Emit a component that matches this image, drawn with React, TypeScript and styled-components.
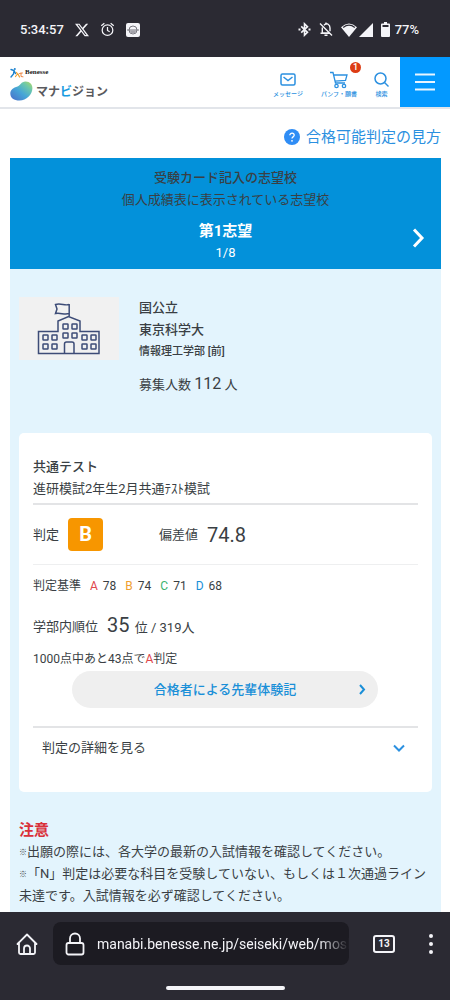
import React from "react";
import styled, { createGlobalStyle } from "styled-components";

const c = {
  chrome: "#2b2a33",
  urlField: "#1c1b22",
  chromeInk: "#f4f4f8",
  blue: "#0391da",
  menu: "#0399ff",
  link: "#2b90e0",
  pale: "#e3f4fd",
  ink: "#3a3f44",
  line: "#e3e4e6",
  red: "#d9303a",
};

const Global = createGlobalStyle`
  * { box-sizing: border-box; }
  body {
    margin: 0;
    background: #fff;
    color: ${c.ink};
    font: 13px/22px Roboto, "Noto Sans CJK JP", sans-serif;
  }
  h1, h2, h3, p, dl, dt, dd { margin: 0; font: inherit; }
  a { color: inherit; text-decoration: none; }
  button { font: inherit; color: inherit; border: 0; background: none; padding: 0; }
  svg { display: block; flex: none; }
`;

const Page = styled.div`
  display: flex;
  flex-direction: column;
  min-height: 100vh;
`;

const StatusBar = styled.div`
  display: flex;
  align-items: center;
  justify-content: space-between;
  height: 57px;
  padding: 2px 31px 0 20px;
  background: ${c.chrome};
  color: ${c.chromeInk};
  font-weight: 500;
`;

const StatusGroup = styled.div<{ $gap: number }>`
  display: flex;
  align-items: center;
  gap: ${(p) => p.$gap}px;
`;

const SiteHeader = styled.header`
  display: flex;
  justify-content: space-between;
  height: 52px;
  border-bottom: 2px solid #e2e5ea;
`;

const Brand = styled.a`
  display: flex;
  flex-direction: column;
  padding: 10px 0 0 10px;
`;

const BrandParent = styled.span`
  display: flex;
  align-items: center;
  gap: 1px;
  height: 11px;
  font: bold 7px/11px "Liberation Serif", serif;
  color: #222;
`;

const BrandName = styled.span`
  display: flex;
  align-items: center;
  gap: 3px;
  margin-top: 3px;
  font: 700 12px/20px "Noto Sans CJK JP", sans-serif;
  color: #5a5a5e;

  em {
    font-style: normal;
    color: #189be0;
  }
`;

const HeaderNav = styled.nav`
  display: flex;
`;

const NavLink = styled.a<{ $width: number }>`
  position: relative;
  display: flex;
  flex-direction: column;
  align-items: center;
  justify-content: flex-end;
  width: ${(p) => p.$width}px;
  padding-bottom: 8px;
  color: ${c.link};
  font-size: 6px;
  font-weight: 500;
  line-height: 10px;
  white-space: nowrap;
`;

const CartBadge = styled.span`
  position: absolute;
  top: 5px;
  right: 7px;
  width: 11px;
  height: 11px;
  border-radius: 50%;
  background: #dd3c14;
  color: #fff;
  font-size: 9px;
  font-weight: 500;
  line-height: 11px;
  text-align: center;
`;

const MenuButton = styled.button`
  display: flex;
  align-items: center;
  justify-content: center;
  width: 50px;
  margin-left: 5px;
  background: ${c.menu};
`;

const Main = styled.main`
  flex: 1;
  display: flex;
  flex-direction: column;
  padding: 17px 9px 0 10px;
`;

const HelpLink = styled.a`
  display: flex;
  align-items: center;
  align-self: flex-end;
  gap: 6px;
  margin-bottom: 10px;
  color: ${c.link};
  font-size: 15px;
`;

const ChoiceBar = styled.section`
  padding: 9px 0 5px;
  background: ${c.blue};
  text-align: center;
`;

const ChoiceHeading = styled.h2`
  font-weight: 500;
`;

const ChoicePager = styled.div`
  display: grid;
  grid-template-columns: 46px 1fr 46px;
  align-items: start;
  margin-top: 9px;
  color: #fff;
`;

const ChoiceName = styled.h3`
  font-size: 15px;
  font-weight: 700;
`;

const NextButton = styled.button`
  grid-column: 3;
  display: flex;
  justify-content: center;
  padding-top: 8px;
`;

const Panel = styled.div`
  flex: 1;
  padding: 28px 9px 5px;
  background: ${c.pale};
`;

const School = styled.section`
  display: flex;
  align-items: flex-start;
  gap: 20px;
  margin-bottom: 37px;
`;

const SchoolPicture = styled.div`
  display: flex;
  align-items: center;
  justify-content: center;
  width: 100px;
  height: 63px;
  background: #f1f1f1;
`;

const SchoolName = styled.h2`
  font-weight: 500;
`;

const Faculty = styled.p`
  margin-bottom: 10px;
  font-size: 11px;
  font-weight: 500;
`;

const Quota = styled.p`
  b {
    font-size: 16px;
    font-weight: 400;
  }
`;

const Card = styled.section`
  padding: 23px 14px 33px;
  border-radius: 5px;
  background: #fff;
`;

const CardTitle = styled.h3`
  font-weight: 500;
`;

const ScoreRow = styled.dl`
  display: flex;
  align-items: center;
  height: 62px;
  margin-top: 3px;
  border-top: 2px solid ${c.line};
  border-bottom: 1px solid #eeeff0;
`;

const Grade = styled.dd`
  width: 35px;
  margin: 0 56px 0 9px;
  border-radius: 4px;
  background: #f79600;
  color: #fff;
  font-size: 20px;
  font-weight: 700;
  line-height: 33px;
  text-align: center;
`;

const Deviation = styled.dd`
  margin-left: 9px;
  font-size: 20px;
`;

const Criteria = styled.dl`
  display: flex;
  gap: 9px;
  margin-top: 10px;
  font-size: 12px;
`;

const Criterion = styled.dd`
  display: flex;
  gap: 5px;
`;

const Letter = styled.span<{ $color: string }>`
  color: ${(p) => p.$color};
`;

const Rank = styled.dl`
  display: flex;
  align-items: center;
  gap: 9px;
  height: 22px;
  margin-top: 19px;

  b {
    margin-right: 2px;
    font-size: 20px;
    font-weight: 400;
    line-height: 20px;
  }
`;

const Shortfall = styled.p`
  margin-top: 10px;
  font-size: 12px;
`;

const StoriesLink = styled.a`
  display: grid;
  grid-template-columns: 32px 1fr 32px;
  align-items: center;
  height: 37px;
  margin: 1px 40px 18px 39px;
  border-radius: 19px;
  background: #efefef;
  color: #1a8fd8;
  font-weight: 500;
  text-align: center;

  svg {
    grid-column: 3;
    justify-self: center;
  }

  span {
    grid-column: 2;
    grid-row: 1;
  }
`;

const DetailsButton = styled.button`
  display: flex;
  align-items: center;
  justify-content: space-between;
  width: 100%;
  padding: 9px 13px 0 9px;
  border-top: 2px solid ${c.line};
`;

const Notice = styled.section`
  margin-top: 27px;
`;

const NoticeTitle = styled.h2`
  color: ${c.red};
  font-size: 15px;
  font-weight: 700;
`;

const Mark = styled.span`
  display: inline-block;
  width: 8px;
  font-size: 8px;
  font-weight: 900;
  line-height: 8px;
  vertical-align: 1px;
`;

const BrowserBar = styled.footer`
  position: sticky;
  bottom: 0;
  height: 88px;
  padding-top: 10px;
  background: ${c.chrome};
  color: ${c.chromeInk};
`;

const BrowserRow = styled.div`
  display: flex;
  align-items: center;
  padding: 0 9px 0 16px;
`;

const BarButton = styled.button`
  display: flex;
  align-items: center;
  justify-content: center;
`;

const AddressField = styled.label`
  flex: 1;
  display: flex;
  align-items: center;
  gap: 12px;
  height: 43px;
  min-width: 0;
  margin: 0 24px 0 15px;
  padding-left: 12px;
  border-radius: 8px;
  background: ${c.urlField};
`;

const AddressInput = styled.input`
  flex: 1;
  min-width: 0;
  height: 30px;
  padding: 0;
  border: 0;
  background: none;
  color: ${c.chromeInk};
  font: 14px/30px Roboto, sans-serif;
  outline: none;
  mask-image: linear-gradient(to right, #000 88%, transparent);
`;

const TabsButton = styled.button`
  width: 22px;
  height: 18px;
  margin-right: 26px;
  border: 2px solid ${c.chromeInk};
  border-radius: 3px;
  font-size: 10px;
  font-weight: 700;
  line-height: 14px;
`;

const GestureHandle = styled.div`
  width: 119px;
  height: 4px;
  margin: 21px auto 0;
  border-radius: 2px;
  background: ${c.chromeInk};
`;

const Chevron = ({ w, h, stroke = 2, color }: { w: number; h: number; stroke?: number; color: string }) => (
  <svg width={w} height={h} viewBox={`0 0 ${w} ${h}`} fill="none" stroke={color} strokeWidth={stroke}>
    <path d={`M${stroke} ${stroke / 2}L${w - stroke} ${h / 2}L${stroke} ${h - stroke / 2}`} />
  </svg>
);

const XIcon = () => (
  <svg width="14" height="14" viewBox="0 0 24 24" fill="currentColor">
    <path d="M18.9 1.2h3.7l-8 9.2L24 22.8h-7.4l-5.8-7.6-6.6 7.6H.5l8.6-9.8L0 1.2h7.6l5.2 6.9zM17.6 20.6h2L6.5 3.2H4.3z" />
  </svg>
);

const AlarmIcon = () => (
  <svg width="15" height="15" viewBox="0 0 24 24" fill="none" stroke="currentColor" strokeWidth="2">
    <circle cx="12" cy="13" r="8.5" />
    <path d="M12 8v5.5l3.5 2M2 6l5-4M22 6l-5-4" />
  </svg>
);

const AppIcon = () => (
  <svg width="14" height="14" viewBox="0 0 14 14">
    <rect width="14" height="14" rx="2" fill="#f4f4f8" />
    <circle cx="7" cy="7" r="4" fill="none" stroke="#77767e" />
    <path d="M1 7h12" stroke="#77767e" />
    <path d="M4 7.5h6a3 3 0 0 1-6 0z" fill="#a3a2aa" />
  </svg>
);

const BluetoothIcon = () => (
  <svg width="13" height="15" viewBox="0 0 13 15" fill="none" stroke="currentColor" strokeWidth="1.6">
    <path d="M3.2 4.3l6.3 6-3 2.900V1.8l3 2.900-6.3 6" />
    <path d="M0.5 7.5h2M10.5 7.5h2" strokeWidth="2" />
  </svg>
);

const BellOffIcon = () => (
  <svg width="14" height="15" viewBox="0 0 14 15" fill="none" stroke="currentColor" strokeWidth="1.4">
    <path d="M5 3.2C8-0 11 3 11 6v3.2M3.3 5.5V11H10M1.5 11.3h9M1 1.5l12 12" />
    <path d="M5.5 13.3h3M7 .5v2" />
  </svg>
);

const WifiIcon = () => (
  <svg width="16" height="14" viewBox="0 0 16 14">
    <path d="M0 4.2Q8-3 16 4.2L8 14z" fill="currentColor" />
    <path d="M2.2 4.4Q8 0 13.8 4.4" fill="none" stroke="#2b2a33" strokeWidth="1.2" />
  </svg>
);

const SignalIcon = () => (
  <svg width="14" height="14" viewBox="0 0 14 14" fill="currentColor">
    <path d="M14 0v14H0z" />
  </svg>
);

const BatteryIcon = () => (
  <svg width="9" height="15" viewBox="0 0 9 15">
    <path d="M3 0h3v1.5h2a1 1 0 0 1 1 1V14a1 1 0 0 1-1 1H1a1 1 0 0 1-1-1V2.5a1 1 0 0 1 1-1h2z" fill="currentColor" />
    <path d="M1.5 3h6v2h-6z" fill="#2b2a33" />
  </svg>
);

const BenesseMark = () => (
  <svg width="14" height="10" viewBox="0 0 14 10" fill="none" strokeLinecap="round">
    <path d="M1 1.5l3 1L3.5 6 1 9M4 2.5l1.5 3" stroke="#1d83cf" strokeWidth="1.4" />
    <circle cx="4.8" cy="1" r="1" fill="#1d83cf" />
    <path d="M5.5 8.5l2-2.5-1-1.5M8 6l1.5 3" stroke="#f0a030" strokeWidth="1.2" />
    <path d="M9.5 5.5l3-.5M11 5v3.5l2 .3" stroke="#ee8a4a" />
  </svg>
);

const BeanLogo = () => (
  <svg width="23" height="20" viewBox="0 0 23 20">
    <defs>
      <linearGradient id="bean" x1="0" y1="1" x2="1" y2="0">
        <stop offset="0" stopColor="#4a6cc8" />
        <stop offset=".45" stopColor="#45a5d8" />
        <stop offset=".75" stopColor="#6cc8ac" />
        <stop offset="1" stopColor="#b5d860" />
      </linearGradient>
    </defs>
    <path
      d="M7.5 5.5C10.5 4.5 11 .8 15.5.6c4.3-.1 7 2.9 6.9 7C22.2 14 16.5 19.5 9.5 19.5 4 19.5.3 17 .3 12.5.3 8.8 3.5 6.5 7.5 5.5z"
      fill="url(#bean)"
    />
  </svg>
);

const MailIcon = () => (
  <svg width="16" height="18" viewBox="0 0 16 18" fill="none" stroke="currentColor" strokeWidth="1.5">
    <rect x="1" y="3" width="14" height="11" rx="1.5" />
    <path d="M3.5 6L8 9.5 12.5 6" />
  </svg>
);

const CartIcon = () => (
  <svg width="18" height="18" viewBox="0 0 18 18" fill="none" stroke="currentColor" strokeWidth="1.3">
    <path d="M0 1.5h3L5.5 12H15M3.6 4H17l-1.5 5.5-10.5.7" />
    <circle cx="6.5" cy="15" r="1.7" />
    <circle cx="14" cy="15" r="1.7" />
  </svg>
);

const SearchIcon = () => (
  <svg width="15" height="18" viewBox="0 0 15 18" fill="none" stroke="currentColor" strokeWidth="1.5">
    <circle cx="6.5" cy="7.5" r="5.5" />
    <path d="M10.5 11.5l4 4" />
  </svg>
);

const MenuIcon = () => (
  <svg width="20" height="18" viewBox="0 0 20 18" stroke="#e8f5ff" strokeWidth="2">
    <path d="M0 1.5h20M0 9h20M0 16.5h20" />
  </svg>
);

const HelpIcon = () => (
  <svg width="16" height="16" viewBox="0 0 16 16">
    <circle cx="8" cy="8" r="8" fill="#2f8df5" />
    <path d="M5.8 6.3c.1-3 4.6-2.7 4.4 0C10.1 8 8 7.8 8 9.6" fill="none" stroke="#fff" strokeWidth="1.3" />
    <circle cx="8" cy="11.8" r=".9" fill="#fff" />
  </svg>
);

const windowSpots = [
  [25, 23], [34, 23], [25, 32], [34, 32],
  [5, 34], [14, 34], [5, 43], [14, 43],
  [44, 34], [53, 34], [44, 43], [53, 43],
];

const SchoolIcon = () => (
  <svg width="64" height="54" viewBox="0 0 64 54" fill="none" stroke="#3d4c77" strokeWidth="1.5">
    <path d="M1.5 51.5v-22h19.5V19L31.5 14.5 43 19v10.5h19v22z" />
    <path d="M32.2 14.5V2M32 2.5c-4 1.5-8-1.5-13.5 0l1.5 4.5-1.5 4.5c5-1 9 1.5 13.5 0" />
    <path d="M27.5 51.5V42q0-2 2-2H35q2 0 2 2v9.5" />
    {windowSpots.map(([x, y]) => (
      <rect key={`${x}-${y}`} x={x + 1} y={y - 1} width="5" height="5" rx=".5" />
    ))}
  </svg>
);

const HomeIcon = () => (
  <svg width="22" height="24" viewBox="0 0 22 24" fill="none" stroke="currentColor" strokeWidth="1.8" strokeLinejoin="round" strokeLinecap="round">
    <path d="M1.5 12L11 2.5l9.5 9.5M3 11v9.5q0 1.5 1.5 1.5h13q1.5 0 1.5-1.5V11" />
    <path d="M8 22v-5.5a3 3 0 0 1 6 0V22" />
  </svg>
);

const LockIcon = () => (
  <svg width="20" height="24" viewBox="0 0 20 24" fill="none" stroke="currentColor" strokeWidth="1.8">
    <rect x="1.5" y="11" width="17" height="11.5" rx="2" />
    <path d="M5 11V6.5a5 5 0 0 1 10 0V11" />
  </svg>
);

const MoreIcon = () => (
  <svg width="20" height="22" viewBox="0 0 20 22" fill="currentColor">
    <circle cx="10" cy="3" r="2" />
    <circle cx="10" cy="11" r="2" />
    <circle cx="10" cy="19" r="2" />
  </svg>
);

const criteria = [
  { letter: "A", color: "#e0474c", score: 78 },
  { letter: "B", color: "#f0a030", score: 74 },
  { letter: "C", color: "#3cb371", score: 71 },
  { letter: "D", color: "#1a8fd8", score: 68 },
];

export default function App() {
  return (
    <Page>
      <Global />
      <StatusBar>
        <StatusGroup $gap={11}>
          <span>5:34:57</span>
          <XIcon />
          <AlarmIcon />
          <AppIcon />
        </StatusGroup>
        <StatusGroup $gap={8}>
          <BluetoothIcon />
          <BellOffIcon />
          <StatusGroup $gap={2}>
            <WifiIcon />
            <SignalIcon />
          </StatusGroup>
          <StatusGroup $gap={5}>
            <BatteryIcon />
            <span>77%</span>
          </StatusGroup>
        </StatusGroup>
      </StatusBar>

      <SiteHeader>
        <Brand href="#">
          <BrandParent>
            <BenesseMark />
            Benesse
          </BrandParent>
          <BrandName>
            <BeanLogo />
            <span>
              マナ<em>ビ</em>ジョン
            </span>
          </BrandName>
        </Brand>
        <HeaderNav>
          <NavLink href="#" $width={44}>
            <MailIcon />
            メッセージ
          </NavLink>
          <NavLink href="#" $width={58}>
            <CartIcon />
            パンフ・願書
            <CartBadge>1</CartBadge>
          </NavLink>
          <NavLink href="#" $width={27}>
            <SearchIcon />
            検索
          </NavLink>
          <MenuButton aria-label="メニュー">
            <MenuIcon />
          </MenuButton>
        </HeaderNav>
      </SiteHeader>

      <Main>
        <HelpLink href="#">
          <HelpIcon />
          合格可能判定の見方
        </HelpLink>

        <ChoiceBar>
          <ChoiceHeading>受験カード記入の志望校</ChoiceHeading>
          <p>個人成績表に表示されている志望校</p>
          <ChoicePager>
            <span />
            <div>
              <ChoiceName>第1志望</ChoiceName>
              <p>1/8</p>
            </div>
            <NextButton aria-label="次の志望校">
              <Chevron w={14} h={20} stroke={3} color="#fff" />
            </NextButton>
          </ChoicePager>
        </ChoiceBar>

        <Panel>
          <School>
            <SchoolPicture>
              <SchoolIcon />
            </SchoolPicture>
            <div>
              <SchoolName>
                国公立
                <br />
                東京科学大
              </SchoolName>
              <Faculty>情報理工学部 [前]</Faculty>
              <Quota>
                募集人数 <b>112</b> 人
              </Quota>
            </div>
          </School>

          <Card>
            <CardTitle>共通テスト</CardTitle>
            <p>進研模試2年生2月共通ﾃｽﾄ模試</p>
            <ScoreRow>
              <dt>判定</dt>
              <Grade>B</Grade>
              <dt>偏差値</dt>
              <Deviation>74.8</Deviation>
            </ScoreRow>
            <Criteria>
              <dt>判定基準</dt>
              {criteria.map((k) => (
                <Criterion key={k.letter}>
                  <Letter $color={k.color}>{k.letter}</Letter>
                  {k.score}
                </Criterion>
              ))}
            </Criteria>
            <Rank>
              <dt>学部内順位</dt>
              <dd>
                <b>35</b> 位 / 319人
              </dd>
            </Rank>
            <Shortfall>
              1000点中あと43点で<Letter $color="#e0474c">A</Letter>判定
            </Shortfall>
            <StoriesLink href="#">
              <span>合格者による先輩体験記</span>
              <Chevron w={8} h={11} color="#1a8fd8" />
            </StoriesLink>
            <DetailsButton aria-expanded={false}>
              判定の詳細を見る
              <svg width="12" height="8" viewBox="0 0 12 8" fill="none" stroke={c.link} strokeWidth="2">
                <path d="M1 1.5L6 6.5 11 1.5" />
              </svg>
            </DetailsButton>
          </Card>

          <Notice>
            <NoticeTitle>注意</NoticeTitle>
            <p>
              <Mark>※</Mark>出願の際には、各大学の最新の入試情報を確認してください。
            </p>
            <p>
              <Mark>※</Mark>「N」判定は必要な科目を受験していない、もしくは１次通過ライン未達です。入試情報を必ず確認してください。
            </p>
          </Notice>
        </Panel>
      </Main>

      <BrowserBar>
        <BrowserRow>
          <BarButton aria-label="ホーム">
            <HomeIcon />
          </BarButton>
          <AddressField>
            <LockIcon />
            <AddressInput aria-label="アドレス" readOnly value="manabi.benesse.ne.jp/seiseki/web/moshi/" />
          </AddressField>
          <TabsButton aria-label="タブ 13">13</TabsButton>
          <BarButton aria-label="その他">
            <MoreIcon />
          </BarButton>
        </BrowserRow>
        <GestureHandle />
      </BrowserBar>
    </Page>
  );
}
